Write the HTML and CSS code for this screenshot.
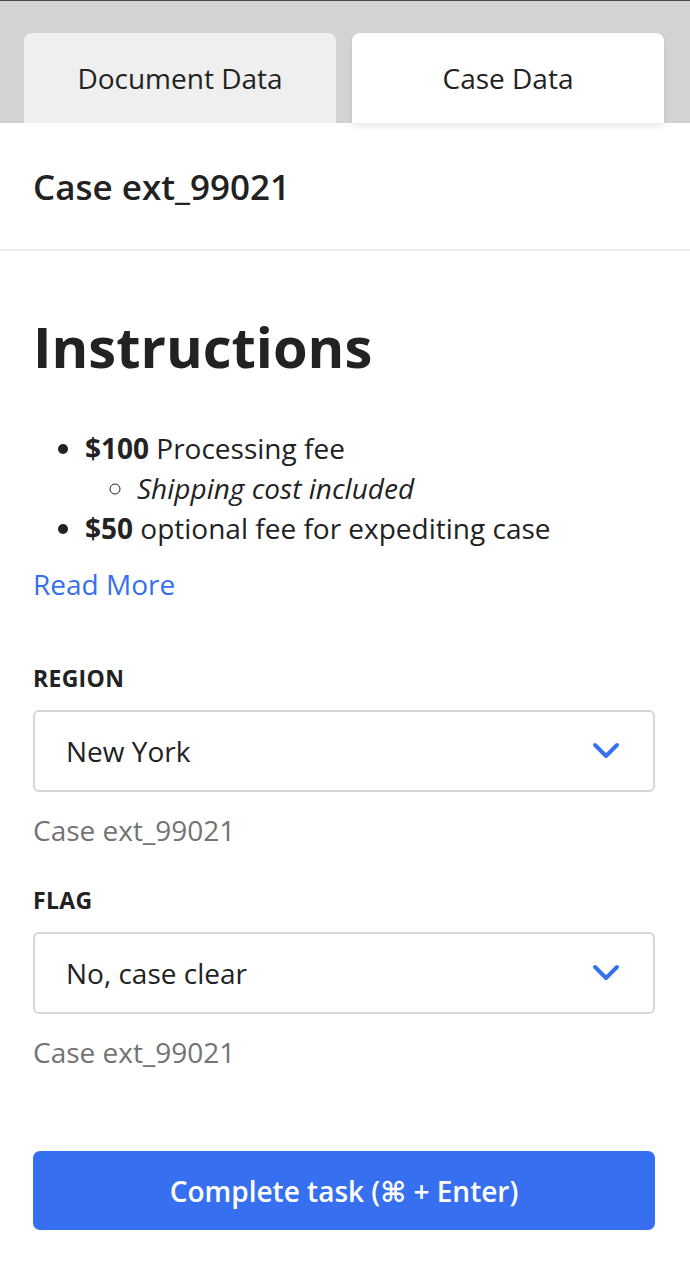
FILE: index.html
```html
<!DOCTYPE html>
<html lang="en">
<head>
    <meta charset="UTF-8">
    <meta name="viewport" content="width=device-width, initial-scale=1.0">
    <title>Case Data</title>
    <link rel="stylesheet" href="styles.css">
</head>
<body>

    <div class="tabs">
        <div class="tab">Document Data</div>
        <div class="tab tab-active">Case Data</div>
    </div>

    <div class="case-header">
        <h2>Case ext_99021</h2>
    </div>

    <div class="content">
        <h1>Instructions</h1>
        <ul class="instructions">
            <li><b>$100</b> Processing fee
                <ul>
                    <li><i>Shipping cost included</i></li>
                </ul>
            </li>
            <li><b>$50</b> optional fee for expediting case</li>
        </ul>
        <a class="read-more" href="#">Read More</a>

        <div class="field">
            <label for="region">REGION</label>
            <div class="select" id="region">
                <span>New York</span>
                <svg class="chevron" width="28" height="18" viewBox="0 0 28 18">
                    <path d="M3 3 L14 14 L25 3" fill="none" stroke="#3670f0" stroke-width="4" stroke-linecap="round" stroke-linejoin="round"/>
                </svg>
            </div>
            <div class="hint">Case ext_99021</div>
        </div>

        <div class="field">
            <label for="flag">FLAG</label>
            <div class="select" id="flag">
                <span>No, case clear</span>
                <svg class="chevron" width="28" height="18" viewBox="0 0 28 18">
                    <path d="M3 3 L14 14 L25 3" fill="none" stroke="#3670f0" stroke-width="4" stroke-linecap="round" stroke-linejoin="round"/>
                </svg>
            </div>
            <div class="hint">Case ext_99021</div>
        </div>

        <button type="button" class="complete">Complete task (⌘ + Enter)</button>
    </div>

</body>
</html>
```

FILE: styles.css
```css
body {
    margin: 0;
    font-family: "Open Sans", "DejaVu Sans", sans-serif;
    color: #222;
    background-color: #fff;
}

.tabs {
    display: flex;
    gap: 16px;
    padding: 32px 26px 0 24px;
    background-color: #d3d3d3;
    border-top: 1px solid #4a4a4a;
}

.tab {
    flex: 1;
    height: 90px;
    display: flex;
    align-items: center;
    justify-content: center;
    font-size: 28px;
    background-color: #efefef;
    border-radius: 8px 8px 0 0;
}

.tab-active {
    background-color: #fff;
    box-shadow: 0 4px 6px rgba(0, 0, 0, 0.08);
    position: relative;
}

.case-header {
    height: 126px;
    display: flex;
    align-items: center;
    padding: 0 33px;
    border-bottom: 2px solid #eeeeee;
}

.case-header h2 {
    margin: 0;
    font-size: 35px;
    font-weight: 600;
}

.content {
    padding: 57px 35px 40px 33px;
}

h1 {
    margin: 0;
    font-size: 56px;
    font-weight: 700;
    line-height: 76px;
}

.instructions {
    margin: 44px 0 0;
    padding-left: 52px;
    font-size: 28px;
    line-height: 40px;
}

.instructions ul {
    margin: 0;
    padding-left: 52px;
    list-style-type: circle;
}

.read-more {
    display: block;
    margin-top: 16px;
    font-size: 28px;
    line-height: 40px;
    color: #3670f0;
    text-decoration: none;
}

.field {
    margin-top: 59px;
}

.field + .field {
    margin-top: 35px;
}

label {
    display: block;
    font-size: 23px;
    font-weight: 700;
    line-height: 30px;
    letter-spacing: 0.3px;
}

.select {
    box-sizing: border-box;
    display: flex;
    align-items: center;
    justify-content: space-between;
    height: 82px;
    margin-top: 17px;
    padding: 0 33px 0 31px;
    border: 2px solid #d6d6d6;
    border-radius: 6px;
    font-size: 28px;
}

.hint {
    margin-top: 18px;
    font-size: 28px;
    line-height: 40px;
    color: #737373;
}

.complete {
    display: block;
    width: 100%;
    height: 79px;
    margin-top: 79px;
    border: none;
    border-radius: 7px;
    background-color: #3670f0;
    color: #fff;
    font-family: inherit;
    font-size: 28px;
    font-weight: 600;
}
```
